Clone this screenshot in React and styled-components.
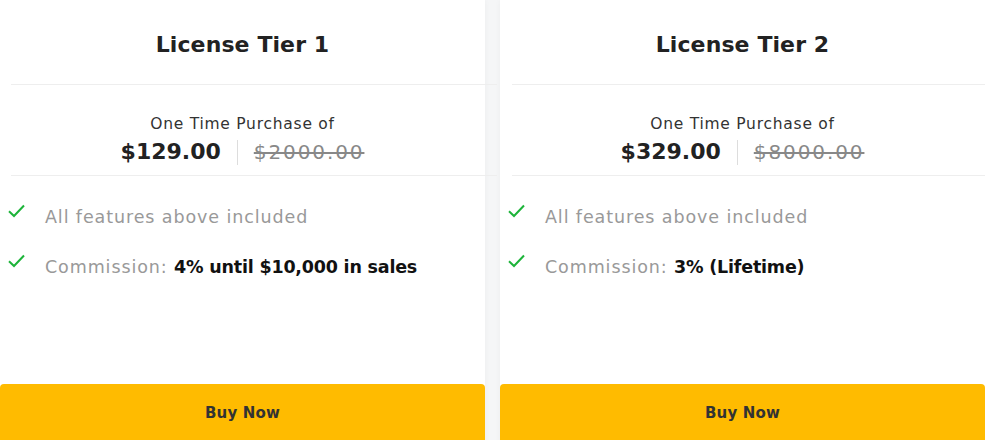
import React from 'react';
import styled, { createGlobalStyle } from 'styled-components';

const GlobalStyle = createGlobalStyle`
  html, body {
    margin: 0;
    padding: 0;
    background: #f5f6f7;
    overflow: hidden;
  }
  body {
    font-family: "DejaVu Sans", "Open Sans", sans-serif;
  }
`;

const Tiers = styled.div`
  display: grid;
  grid-template-columns: 485px 485px;
  column-gap: 15px;
  height: 440px;
`;

const Card = styled.div`
  display: flex;
  flex-direction: column;
  background: #fff;
  box-shadow: 0 0 6px rgba(0, 0, 0, 0.04);
  height: 460px;
`;

const CardHeader = styled.div`
  height: 84px;
  display: flex;
  align-items: center;
  justify-content: center;
`;

const Title = styled.h2`
  margin: 0;
  padding-top: 4px;
  font-size: 22px;
  font-weight: 700;
  color: #222;
  letter-spacing: 0.1px;
`;

const Divider = styled.div`
  height: 1px;
  background: #eeeeee;
  margin: 0 -12px 0 ${p => p.$inset}px;
  position: relative;
  z-index: 1;
`;

const PriceBlock = styled.div`
  height: 90px;
  display: flex;
  flex-direction: column;
  align-items: center;
  padding-top: 29px;
  box-sizing: border-box;
`;

const PriceLabel = styled.div`
  font-size: 15.5px;
  color: #333;
  line-height: 20px;
  letter-spacing: 0.75px;
`;

const PriceRow = styled.div`
  display: flex;
  align-items: center;
  margin-top: 4px;
`;

const Price = styled.span`
  font-size: 22px;
  font-weight: 700;
  color: #222;
  line-height: 28px;
`;

const PriceSep = styled.span`
  width: 1px;
  height: 25px;
  background: #dddddd;
  margin: 0 16px 0 16px;
`;

const OldPrice = styled.span`
  font-size: 20px;
  color: #888;
  text-decoration: line-through;
  line-height: 28px;
  letter-spacing: 1.9px;
`;

const Features = styled.ul`
  list-style: none;
  margin: 0;
  padding: 28px 0 0 8px;
  flex: 1;
  display: flex;
  flex-direction: column;
  gap: 24px;
`;

const Feature = styled.li`
  display: flex;
  align-items: flex-start;
  font-size: 17.5px;
  line-height: 26px;
  color: #999;
  letter-spacing: 0.9px;

  svg {
    flex: none;
    margin-top: 0;
    margin-right: 20px;
  }

  strong {
    color: #111;
    font-weight: 700;
    letter-spacing: -0.2px;
  }
`;

const BuyButton = styled.button`
  flex: none;
  height: 76px;
  border: none;
  border-radius: 4px;
  background: #ffbb00;
  color: #333;
  font-family: inherit;
  font-size: 15px;
  font-weight: 700;
  letter-spacing: 0.2px;
  padding: 0 0 18px;
  cursor: pointer;
`;

const Check = () => (
  <svg width="17" height="14" viewBox="0 0 17 14">
    <path d="M1 7.2 L6 12 L16 1.5" fill="none" stroke="#1db43a" strokeWidth="2" />
  </svg>
);

const tiers = [
  { name: 'License Tier 1', price: '$129.00', old: '$2000.00', commission: '4% until $10,000 in sales', inset: 11 },
  { name: 'License Tier 2', price: '$329.00', old: '$8000.00', commission: '3% (Lifetime)', inset: 12 },
];

const App = () => (
  <>
    <GlobalStyle />
    <Tiers>
      {tiers.map(tier => (
        <Card key={tier.name}>
          <CardHeader>
            <Title>{tier.name}</Title>
          </CardHeader>
          <Divider $inset={tier.inset} />
          <PriceBlock>
            <PriceLabel>One Time Purchase of</PriceLabel>
            <PriceRow>
              <Price>{tier.price}</Price>
              <PriceSep />
              <OldPrice>{tier.old}</OldPrice>
            </PriceRow>
          </PriceBlock>
          <Divider $inset={tier.inset} />
          <Features>
            <Feature>
              <Check />
              <span>All features above included</span>
            </Feature>
            <Feature>
              <Check />
              <span>Commission: <strong>{tier.commission}</strong></span>
            </Feature>
          </Features>
          <BuyButton>Buy Now</BuyButton>
        </Card>
      ))}
    </Tiers>
  </>
);

export default App;
